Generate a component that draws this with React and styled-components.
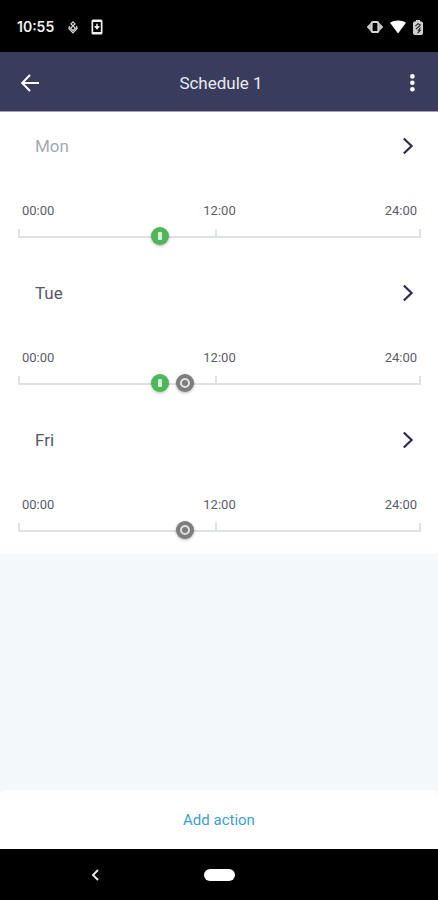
import React from 'react';
import styled, { createGlobalStyle } from 'styled-components';

const GlobalStyle = createGlobalStyle`
  * {
    box-sizing: border-box;
  }

  body {
    margin: 0;
    font-family: Roboto, "Liberation Sans", sans-serif;
  }

  button {
    display: flex;
    align-items: center;
    justify-content: center;
    padding: 0;
    border: none;
    background: none;
    font-family: inherit;
    cursor: pointer;
  }

  svg {
    display: block;
  }
`;

const Screen = styled.div`
  display: flex;
  flex-direction: column;
  min-height: 100vh;
  background: #f3f8fb;
`;

const StatusBar = styled.div`
  display: flex;
  align-items: center;
  justify-content: space-between;
  height: 52px;
  padding: 2px 15px 0 17px;
  background: #000;
  color: #f0f0f0;
`;

const StatusGroup = styled.div`
  display: flex;
  align-items: center;
  gap: ${({ $gap }) => $gap};
`;

const Clock = styled.span`
  width: 38px;
  font-family: Inter, sans-serif;
  font-size: 14px;
  font-weight: 600;
  line-height: 20px;
`;

const Header = styled.header`
  display: grid;
  grid-template-columns: 40px 1fr 40px;
  align-items: center;
  height: 60px;
  padding: 2px 6px 0 10px;
  border-bottom: 1px solid #a3a4b5;
  background: #393c5c;
`;

const Title = styled.h1`
  margin: 0;
  color: #e9eaf2;
  font-size: 17px;
  font-weight: 400;
  line-height: 24px;
  text-align: center;
`;

const IconButton = styled.button`
  width: 40px;
  height: 40px;
`;

const Main = styled.main`
  flex: 1;
`;

const DayList = styled.ul`
  margin: 0;
  padding: 0 0 1px;
  list-style: none;
  background: #fff;
`;

const Day = styled.li`
  height: 147px;
`;

const DayButton = styled.button`
  && {
    justify-content: space-between;
    width: 100%;
    height: 68px;
    padding: 0 24px 0 35px;
  }
  color: ${({ $muted }) => ($muted ? '#a3abb6' : '#55566a')};
  font-size: 17px;
  line-height: 24px;
`;

const Hours = styled.div`
  display: flex;
  justify-content: space-between;
  padding: 21px 21px 0 22px;
  color: #5c5d6c;
  font-size: 13px;
  line-height: 20px;
`;

const Track = styled.div`
  position: relative;
  display: flex;
  margin: 8px 17px 0 18px;
  border-right: 2px solid #dfe2e4;
`;

const Half = styled.div`
  flex: ${({ $grow }) => $grow} 0 0;
  height: 9px;
  border-bottom: 2px solid #dfe2e4;
  border-left: 2px solid #dfe2e4;
`;

const Marker = styled.span`
  position: absolute;
  top: 7px;
  display: flex;
  align-items: center;
  justify-content: center;
  width: 18px;
  height: 18px;
  border-radius: 50%;
  background: ${({ $on }) => ($on ? '#4fb75b' : '#7d7d7d')};
  box-shadow: 0 1px 3px rgba(0, 0, 0, 0.3);
  transform: translate(-50%, -50%);
`;

const OnMark = styled.span`
  width: 4px;
  height: 8px;
  border-radius: 1px;
  background: #d8f0da;
`;

const OffMark = styled.span`
  width: 10px;
  height: 10px;
  border: 2px solid #e0e0e0;
  border-radius: 50%;
`;

const Footer = styled.footer`
  border-radius: 6px 6px 0 0;
  background: #fff;
`;

const AddButton = styled.button`
  width: 100%;
  height: 59px;
  color: #3c9fd4;
  font-size: 15px;
  line-height: 20px;
`;

const NavBar = styled.nav`
  display: grid;
  grid-template-columns: 1fr 58px 1fr;
  align-items: center;
  justify-items: center;
  height: 51px;
  background: #000;
`;

const NavButton = styled.button`
  width: 40px;
  height: 40px;
`;

const HomePill = styled.span`
  width: 31px;
  height: 12px;
  border-radius: 6px;
  background: #fff;
`;

const days = [
  { name: 'Mon', muted: true, actions: [{ hour: 8.5, on: true }] },
  { name: 'Tue', actions: [{ hour: 8.5, on: true }, { hour: 10, on: false }] },
  { name: 'Fri', actions: [{ hour: 10, on: false }] },
];

const KnotIcon = () => (
  <svg width="10" height="13" viewBox="0 0 10 13" fill="none" stroke="#d4d4d4" strokeWidth="1.3">
    <path d="M5 0.9L7 2.9L5 4.9L3 2.9ZM5 4.9L7.4 7.3L5 9.6L2.6 7.3ZM1.6 5L0.9 7.6L5 11.9L9.1 7.6L8.4 5" />
  </svg>
);

const PhoneUpdateIcon = () => (
  <svg width="12" height="16" viewBox="0 0 12 16">
    <rect x="0.5" y="0.5" width="11" height="15" rx="1.5" fill="#f0f0f0" />
    <rect x="2.2" y="3" width="7.6" height="10" fill="#000" />
    <path d="M6 4.8V10M3.6 7.8H8.4" fill="none" stroke="#f0f0f0" strokeWidth="1.5" />
    <path d="M4 8H8L6 10.8Z" fill="#f0f0f0" />
  </svg>
);

const VibrateIcon = () => (
  <svg width="16" height="12" viewBox="0 0 16 12">
    <path d="M0 6L3.6 2.2V9.8ZM16 6L12.4 2.2V9.8Z" fill="#c8c8c8" stroke="#c8c8c8" strokeWidth="0.6" />
    <rect x="4.6" y="1" width="6.8" height="10" rx="1.6" fill="#000" stroke="#d4d4d4" strokeWidth="2" />
  </svg>
);

const WifiIcon = () => (
  <svg width="16" height="14" viewBox="0 0 16 14">
    <path d="M8 13.5L0 2.8C4.5 -0.4 11.5 -0.4 16 2.8Z" fill="#fff" />
  </svg>
);

const BatteryIcon = () => (
  <svg width="10" height="15" viewBox="0 0 10 15">
    <path d="M3 0H7V1.2H8Q10 1.5 10 3.2V13.2Q10 15 8.2 15H1.8Q0 15 0 13.2V3.2Q0 1.5 2 1.2H3Z" fill="#cfcfcf" />
    <path d="M2.4 6.2L5 3.6L7.4 5L3 9.2M7.5 7.5L5.5 10.2H7.3L4.6 13.2" fill="none" stroke="#222" strokeWidth="1.1" />
  </svg>
);

const BackIcon = () => (
  <svg width="20" height="18" viewBox="0 0 20 18" fill="none" stroke="#fff" strokeWidth="2">
    <path d="M19 9H2.5M10 1L2.2 9L10 17" />
  </svg>
);

const MoreIcon = () => (
  <svg width="6" height="18" viewBox="0 0 6 18" fill="#fff">
    <circle cx="3.4" cy="2.4" r="2.3" />
    <circle cx="3.4" cy="8.8" r="2.3" />
    <circle cx="3.4" cy="15.2" r="2.3" />
  </svg>
);

const ChevronIcon = () => (
  <svg width="12" height="18" viewBox="0 0 12 18" fill="none" stroke="#2d2a58" strokeWidth="2.2">
    <path d="M1.8 1.5L9.6 9L1.8 16.5" />
  </svg>
);

const NavBackIcon = () => (
  <svg width="8" height="12" viewBox="0 0 8 12" fill="none" stroke="#e6e6e6" strokeWidth="2">
    <path d="M7 1L2 6L7 11" />
  </svg>
);

const Timeline = ({ actions }) => (
  <Track>
    <Half $grow={49} />
    <Half $grow={51} />
    {actions.map(({ hour, on }) => (
      <Marker key={hour} $on={on} style={{ left: `${(hour / 24) * 100}%` }}>
        {on ? <OnMark /> : <OffMark />}
      </Marker>
    ))}
  </Track>
);

const App = () => {
  return (
    <Screen>
      <GlobalStyle />
      <StatusBar>
        <StatusGroup $gap="13px">
          <Clock>10:55</Clock>
          <KnotIcon />
          <PhoneUpdateIcon />
        </StatusGroup>
        <StatusGroup $gap="7px">
          <VibrateIcon />
          <WifiIcon />
          <BatteryIcon />
        </StatusGroup>
      </StatusBar>
      <Header>
        <IconButton aria-label="Back">
          <BackIcon />
        </IconButton>
        <Title>Schedule 1</Title>
        <IconButton aria-label="More options">
          <MoreIcon />
        </IconButton>
      </Header>
      <Main>
        <DayList>
          {days.map(({ name, muted, actions }) => (
            <Day key={name}>
              <DayButton $muted={muted}>
                {name}
                <ChevronIcon />
              </DayButton>
              <Hours>
                <span>00:00</span>
                <span>12:00</span>
                <span>24:00</span>
              </Hours>
              <Timeline actions={actions} />
            </Day>
          ))}
        </DayList>
      </Main>
      <Footer>
        <AddButton>Add action</AddButton>
      </Footer>
      <NavBar>
        <NavButton aria-label="System back">
          <NavBackIcon />
        </NavButton>
        <NavButton aria-label="Home">
          <HomePill />
        </NavButton>
      </NavBar>
    </Screen>
  );
};

export default App;
